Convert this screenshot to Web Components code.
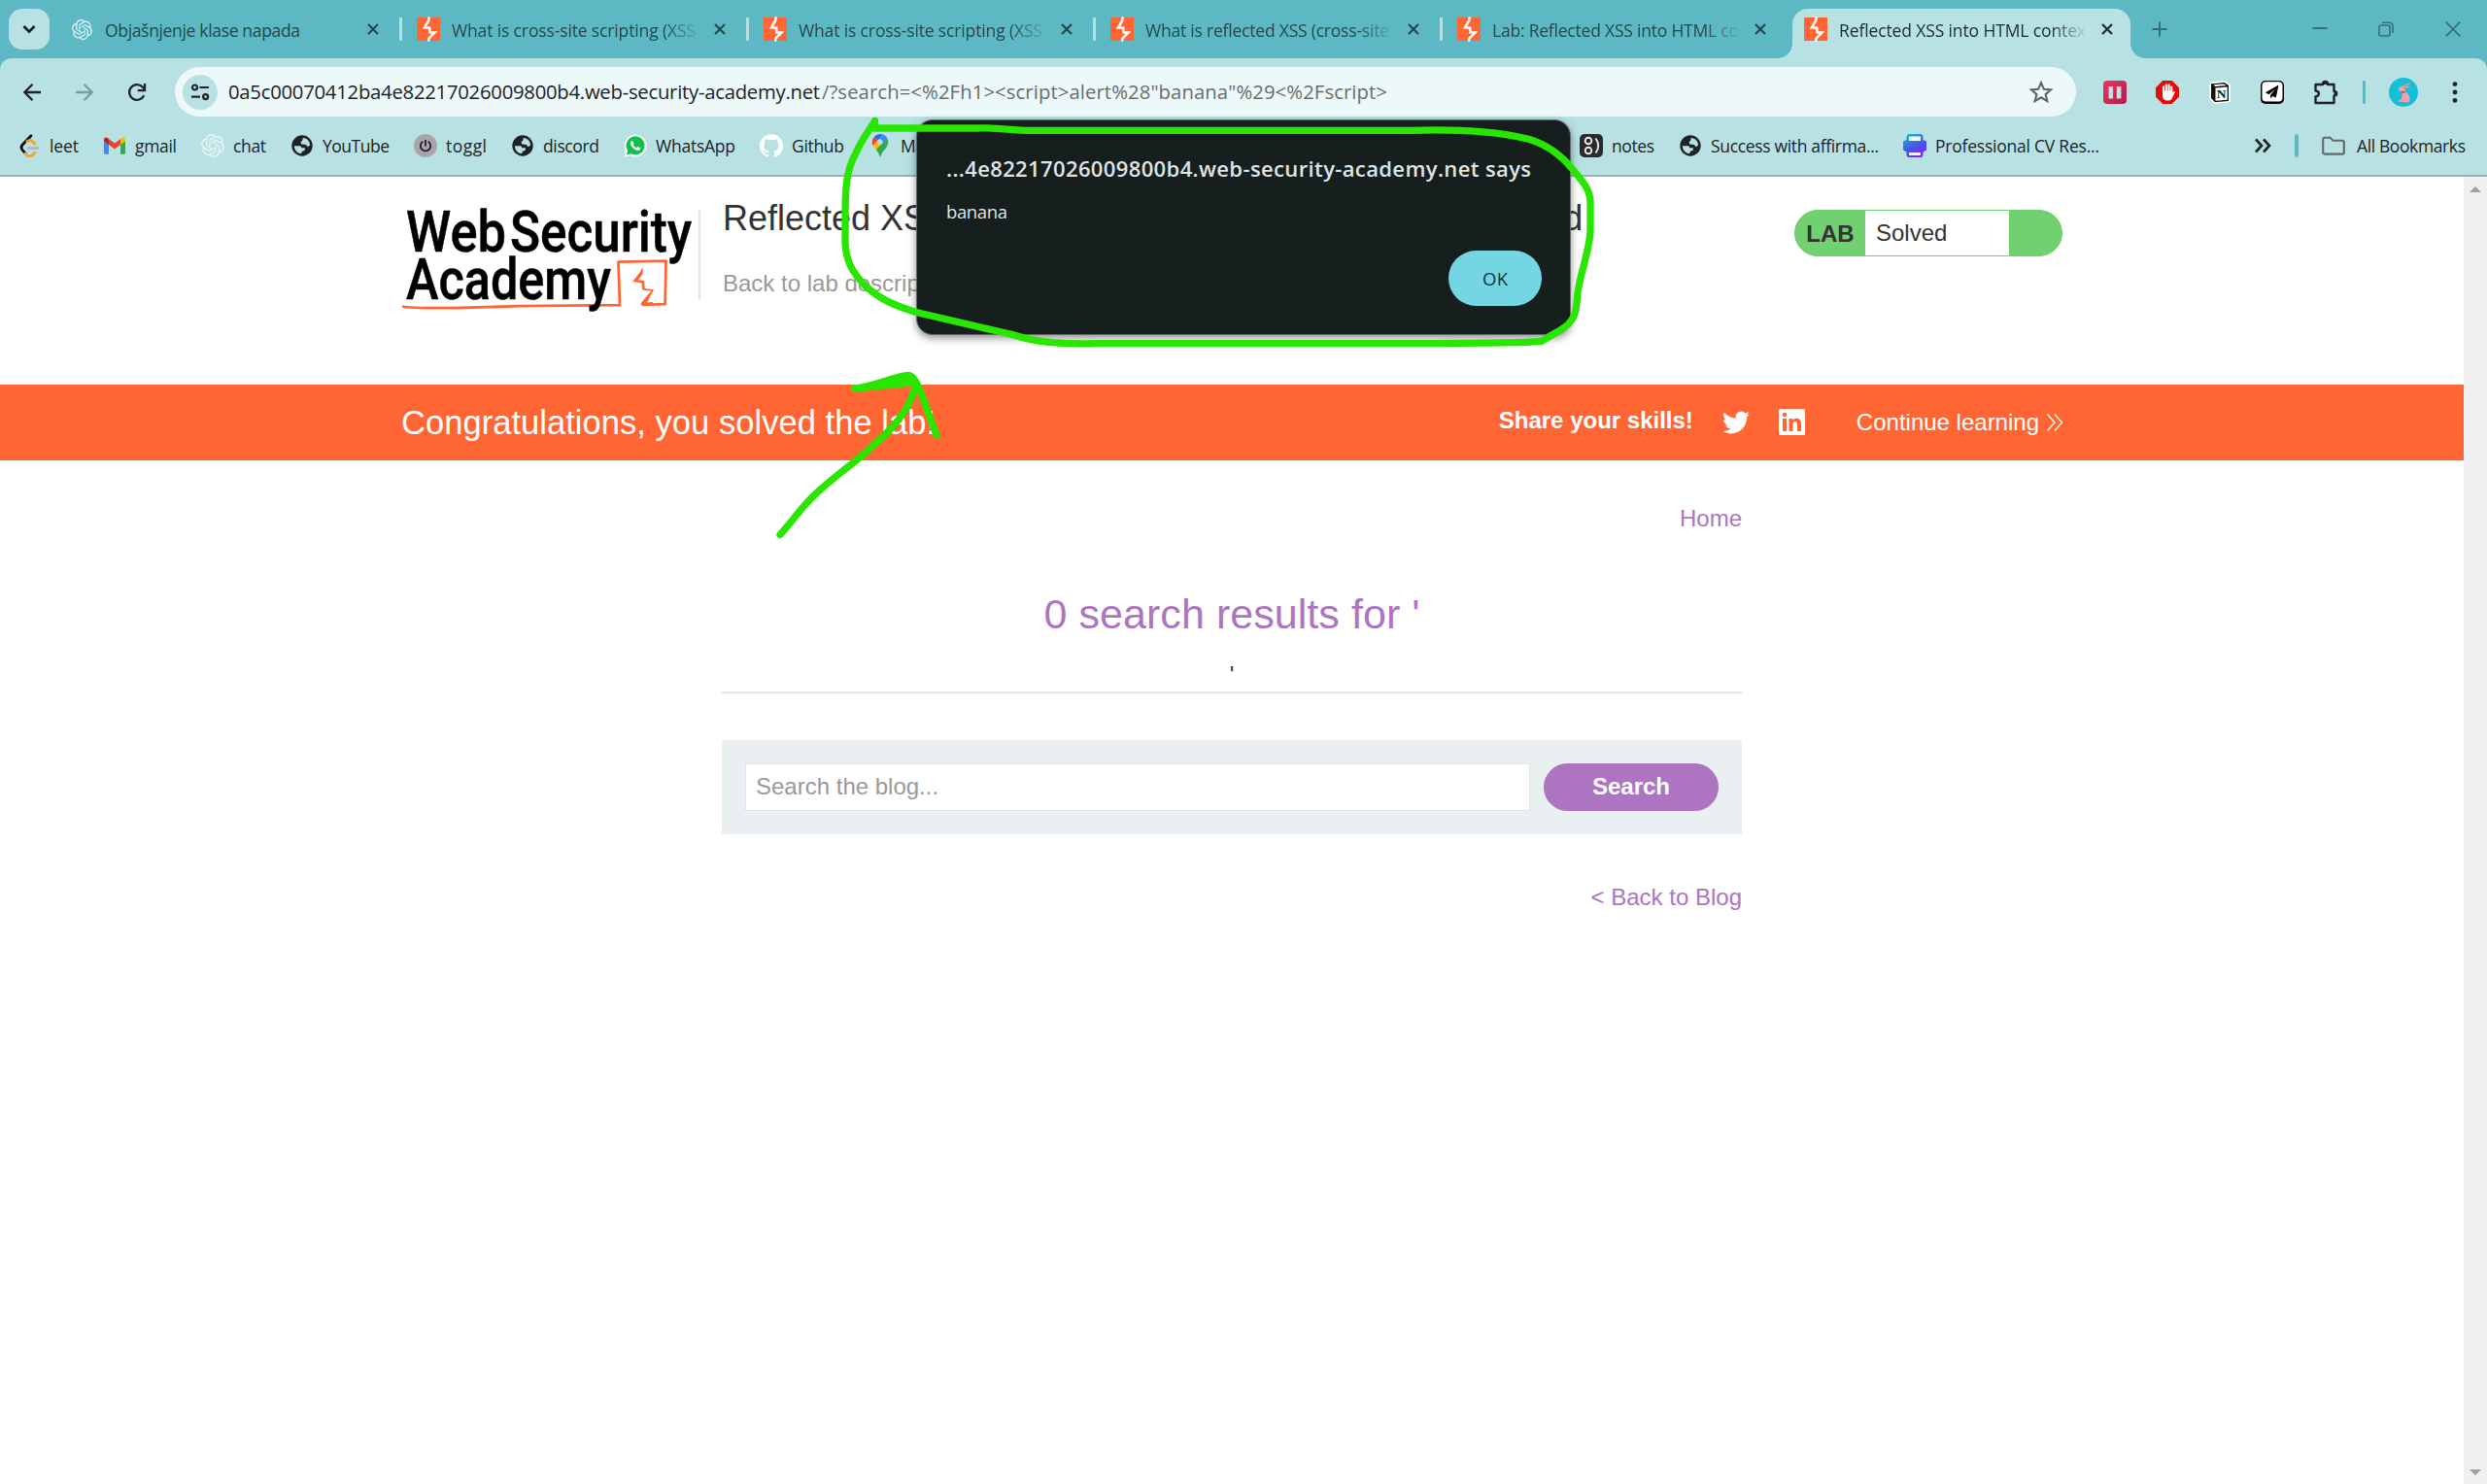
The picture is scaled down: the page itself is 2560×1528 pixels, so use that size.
<!DOCTYPE html>
<html lang="en">
<head>
<meta charset="utf-8">
<title>Reflected XSS into HTML context with nothing encoded</title>
<style>
html,body{margin:0;height:100%;overflow:hidden;background:#fff}
body{font-family:"Liberation Sans",Arial,sans-serif}
</style>
</head>
<body>
<browser-window></browser-window>
<script>
const UI = '"Open Sans","Noto Sans",sans-serif';
const define = (name, html, init) => {
  const tpl = document.createElement('template');
  tpl.innerHTML = html;
  customElements.define(name, class extends HTMLElement {
    constructor() { super(); this.attachShadow({mode: 'open'}); }
    connectedCallback() {
      if (this.ready) return;
      this.ready = true;
      this.shadowRoot.append(tpl.content.cloneNode(true));
      if (init) init(this, this.shadowRoot);
    }
  });
};

/* Text whose tracking adapts so that it fills a given width */
define('fit-text', `<style>:host{display:block;flex:none;white-space:pre}span{display:inline-block}</style><span><slot></slot></span>`,
  (el, root) => {
    const w = +el.getAttribute('w'), s = root.querySelector('span'), n = el.textContent.length;
    s.style.letterSpacing = ((w - s.getBoundingClientRect().width) / Math.max(1, n - 1)).toFixed(3) + 'px';
    el.style.width = w + 'px';
  });

const ICONS = {
  burp: [24, `<rect width="24" height="24" fill="#ff6633"/><path d="M12.8-.5 12 3.5 8 10.3l5.2.4.3 4.6 5 .2-6 6-.5 3" fill="none" stroke="#fff" stroke-width="2.5"/>`],
  gpt: [24, `<path fill="currentColor" d="M22.2819 9.8211a5.9847 5.9847 0 0 0-.5157-4.9108 6.0462 6.0462 0 0 0-6.5098-2.9A6.0651 6.0651 0 0 0 4.9807 4.1818a5.9847 5.9847 0 0 0-3.9977 2.9 6.0462 6.0462 0 0 0 .7427 7.0966 5.98 5.98 0 0 0 .511 4.9107 6.051 6.051 0 0 0 6.5146 2.9001A5.9847 5.9847 0 0 0 13.2599 24a6.0557 6.0557 0 0 0 5.7718-4.2058 5.9894 5.9894 0 0 0 3.9977-2.9001 6.0557 6.0557 0 0 0-.7475-7.0729zm-9.022 12.6081a4.4755 4.4755 0 0 1-2.8764-1.0408l.1419-.0804 4.7783-2.7582a.7948.7948 0 0 0 .3927-.6813v-6.7369l2.02 1.1686a.071.071 0 0 1 .038.052v5.5826a4.504 4.504 0 0 1-4.4945 4.4944zm-9.6607-4.1254a4.4708 4.4708 0 0 1-.5346-3.0137l.142.0852 4.783 2.7582a.7712.7712 0 0 0 .7806 0l5.8428-3.3685v2.3324a.0804.0804 0 0 1-.0332.0615L9.74 19.9502a4.4992 4.4992 0 0 1-6.1408-1.6464zM2.3408 7.8956a4.485 4.485 0 0 1 2.3655-1.9728V11.6a.7664.7664 0 0 0 .3879.6765l5.8144 3.3543-2.0201 1.1685a.0757.0757 0 0 1-.071 0l-4.8303-2.7865A4.504 4.504 0 0 1 2.3408 7.872zm16.5963 3.8558L13.1038 8.364 15.1192 7.2a.0757.0757 0 0 1 .071 0l4.8303 2.7913a4.4944 4.4944 0 0 1-.6765 8.1042v-5.6772a.79.79 0 0 0-.407-.667zm2.0107-3.0231l-.142-.0852-4.7735-2.7818a.7759.7759 0 0 0-.7854 0L9.409 9.2297V6.8974a.0662.0662 0 0 1 .0284-.0615l4.8303-2.7866a4.4992 4.4992 0 0 1 6.6802 4.66zM8.3065 12.863l-2.02-1.1638a.0804.0804 0 0 1-.038-.0567V6.0742a4.4992 4.4992 0 0 1 7.3757-3.4537l-.142.0805L8.704 5.459a.7948.7948 0 0 0-.3927.6813zm1.0976-2.3654l2.602-1.4998 2.6069 1.4998v2.9994l-2.5974 1.4997-2.6067-1.4997Z"/>`],
  close: [12, `<path d="M1 1l10 10M11 1 1 11" stroke="currentColor" stroke-width="2.2" fill="none"/>`],
  chevron: [14, `<path d="M1.5 4 7 9.7 12.5 4" stroke="currentColor" stroke-width="2.6" fill="none"/>`],
  plus: [16, `<path d="M8 .5v15M.5 8h15" stroke="currentColor" stroke-width="2" fill="none"/>`],
  min: [16, `<path d="M.5 7h15" stroke="currentColor" stroke-width="2" fill="none"/>`],
  restore: [16, `<path d="M4 1.2h7.3a3.7 3.7 0 0 1 3.7 3.7V12" stroke="currentColor" stroke-width="1.6" fill="none"/><rect x="1" y="4" width="11" height="11" rx="2" stroke="currentColor" stroke-width="1.6" fill="none"/>`],
  wclose: [16, `<path d="M.7.7l14.6 14.6M15.3.7.7 15.3" stroke="currentColor" stroke-width="1.7" fill="none"/>`],
  back: [20, `<path d="M19 10H3M10.5 1.8 2.3 10l8.2 8.2" stroke="currentColor" stroke-width="2.3" fill="none"/>`],
  fwd: [20, `<path d="M1 10h16M9.5 1.8 17.7 10l-8.2 8.2" stroke="currentColor" stroke-width="2.3" fill="none"/>`],
  reload: [20, `<path d="M17.2 13.2A7.9 7.9 0 1 1 15.7 4.5L18 7" stroke="currentColor" stroke-width="2.3" fill="none"/><path d="M18 1v7.2h-7.2" stroke="currentColor" stroke-width="2.3" fill="none"/>`],
  tune: [20, `<g stroke="currentColor" stroke-width="2.2" fill="none"><circle cx="4.5" cy="5" r="2.5"/><path d="M9.5 5H19M1 14.6h9"/><circle cx="15.6" cy="14.6" r="2.5"/></g>`],
  star: [24, `<path d="M12 2.2l2.9 6.6 7.1.6-5.4 4.7 1.7 7L12 17.3l-6.3 3.8 1.7-7L2 9.4l7.1-.6z" fill="none" stroke="#5b6365" stroke-width="2.1"/>`],
  pause: [24, `<defs><linearGradient id="g" x1="0" y1="0" x2="1" y2="1"><stop offset="0" stop-color="#ee3463"/><stop offset="1" stop-color="#a81f48"/></linearGradient></defs><rect width="24" height="24" rx="4" fill="url(#g)"/><path d="M5.5 6h4.6v12.500H5.500zM13.800 6h4.600v12.500h-4.600z" fill="#c9dde2"/>`],
  hand: [24, `<path d="M7.200 0h9.600L24 7.200v9.600L16.800 24H7.200L0 16.800V7.200z" fill="#e60b0b"/><path d="M8 13V6.200M10.800 11V4.300M13.600 11V4.400M16.300 12V6.500" stroke="#fff" stroke-width="2.100" stroke-linecap="round"/><path d="M7 10.500h10.300v2l1.400-1.400c1-.4 1.300.5.900 1.200l-3 6.200c-1 1.600-2 2-4 2-3.600 0-5.600-2-5.600-5z" fill="#fff"/>`],
  notion: [24, `<path d="M1.500 1.500 17.500 0l5.500 4v18L6.500 24 1.500 19z" fill="#fff"/><path d="M3 3.200 16.700 2 21 5v16L7 22.200 3 18z" fill="#111"/><path d="M5.500 4.300 16 3.400l2.600 1.700-11.300.800z" fill="#fff"/><path d="M7.500 7.400 19.700 6.600v13.200L7.500 20.700z" fill="#fff"/><text x="13.600" y="18.300" text-anchor="middle" font-family="Liberation Serif,serif" font-weight="700" font-size="13.500" fill="#111">N</text>`],
  plane: [26, `<rect x="1" y="1" width="24" height="24" rx="5" fill="#000"/><rect x="2.500" y="2.200" width="21" height="20.300" rx="4" fill="#fff"/><path d="M19.500 5.500 5.800 13.300l3.800 1.900L16 9.500l-5 6.500v3.300l2.300-2.400 3.500 1.600z" fill="#000"/>`],
  puzzle: [26, `<path d="M2.500 5h7.500c0-4 5-4 5 0h6.500v7c3.600 0 3.600 4.600 0 4.600v7.400h-19v-6.500c4.500-.6 4.500-5.400 0-6z" fill="none" stroke="currentColor" stroke-width="2.400" stroke-linejoin="round"/><path d="M9.700 5c0-4.600 5.600-4.600 5.600 0zM21.500 11.500c4.400 0 4.400 5.600 0 5.600z" fill="currentColor"/>`],
  avatar: [30, `<circle cx="15" cy="15" r="15" fill="#13c0d9"/><path d="M20 25.500c2.600-2.500 2-6.500-.8-9l-2.700-2-3.500 2 1 1.500-1.500 4-3.500 2.500z" fill="#f3a0a8"/><path d="M9.500 11.500c1-2.600 3.500-3.400 5.800-2.300l1.700 3-1 2.600-3.500-.5c-1.800-.5-2.800-1.500-3-2.800z" fill="#f3a0a8"/><path d="M14 9.500 21.700 6M14.500 10.500l7-1" stroke="#f08d98" stroke-width="1.700"/><path d="M12 14.500l4.500-.5-.5 2z" fill="#c93648"/>`],
  dots: [24, `<g fill="currentColor"><circle cx="12" cy="3.600" r="2.400"/><circle cx="12" cy="12" r="2.400"/><circle cx="12" cy="20.400" r="2.400"/></g>`],
  leet: [24, `<path d="M14 1.800 5.200 11c-1.700 1.900-1.700 3.700 0 5.600l3.300 3.600" fill="none" stroke="#0b0b0b" stroke-width="2.700" stroke-linecap="round"/><path d="M8 20l1.300 1.400c1.900 1.700 4.700 1.700 6.500 0l2.200-2.300M9.800 7.600c2-1.500 4.300-1.200 6 .3l2.200 2" fill="none" stroke="#ffa116" stroke-width="2.700" stroke-linecap="round"/><path d="M11 14.500h10" stroke="#b3b3b3" stroke-width="2.500" stroke-linecap="round"/>`],
  gmail: [24, `<path d="M1 6.500v12.700c0 .9.700 1.600 1.600 1.600H6V10z" fill="#4285f4"/><path d="M23 6.500v12.700c0 .9-.7 1.600-1.600 1.600H18V10z" fill="#34a853"/><path d="M18 5.500V11l5-3.800V5.900c0-2.200-2.300-3-3.700-1.900z" fill="#fbbc04"/><path d="M6 11V5l6 4.500L18 5v6l-6 4.600z" fill="#ea4335"/><path d="M1 5.900v1.300L6 11V5.300L4.700 4C3.300 2.900 1 3.700 1 5.900z" fill="#c5221f"/>`],
  globe: [24, `<circle cx="12" cy="12" r="10.700" fill="#202326"/><path d="M12.800 4c4 .2 7.100 3.200 7.300 7.500l-2.600 1.800-1.500-2.300-4.600-.5-.9-2.500 1.700-1z" fill="#b8e1e4"/><path d="M3.900 12.200h6.300l1.300 2h3.300v2.600l-3.100 1.100-.4 2.200c-4.200-.3-7.400-3.600-7.400-7.900z" fill="#b8e1e4"/>`],
  toggl: [24, `<circle cx="12" cy="12" r="12" fill="#aaa5a9"/><path d="M12 6v6.500M9.300 7.800a5.200 5.200 0 1 0 5.400 0" fill="none" stroke="#2c1338" stroke-width="1.800"/>`],
  whatsapp: [24, `<path d="M.5 23.800 2 17.500A11.500 11.500 0 1 1 7 22.300z" fill="#fff"/><path d="M3 21.300l1-4.400A9.500 9.500 0 1 1 7.500 20.200z" fill="#11c04b"/><path d="M8.700 6.800c-.7 0-2 1-1.700 3 .5 3 3.600 6.300 7.300 7.100 1.700.2 2.900-.9 3-2.400l-2.800-1.500-1.300 1.300c-1.800-.8-2.900-2-3.600-3.500l1-1.200z" fill="#fff"/>`],
  github: [24, `<path fill="#fff" d="M12 .297c-6.630 0-12 5.373-12 12 0 5.303 3.438 9.800 8.205 11.385.6.113.820-.258.820-.577 0-.285-.010-1.040-.015-2.040-3.338.724-4.042-1.610-4.042-1.610C4.422 18.070 3.633 17.700 3.633 17.700c-1.087-.744.084-.729.084-.729 1.205.084 1.838 1.236 1.838 1.236 1.070 1.835 2.809 1.305 3.495.998.108-.776.417-1.305.760-1.605-2.665-.300-5.466-1.332-5.466-5.930 0-1.310.465-2.380 1.235-3.220-.135-.303-.540-1.523.105-3.176 0 0 1.005-.322 3.300 1.230.960-.267 1.980-.399 3-.405 1.020.006 2.040.138 3 .405 2.280-1.552 3.285-1.230 3.285-1.230.645 1.653.240 2.873.120 3.176.765.840 1.230 1.910 1.230 3.220 0 4.610-2.805 5.625-5.475 5.920.420.360.810 1.096.810 2.220 0 1.606-.015 2.896-.015 3.286 0 .315.210.690.825.570C20.565 22.092 24 17.592 24 12.297c0-6.627-5.373-12-12-12"/>`],
  maps: [24, `<path d="M12 0a8.200 8.200 0 0 0-6.300 2.900L9.600 6.300 15 .6A8 8 0 0 0 12 0z" fill="#1a73e8"/><path d="M5.700 2.900A8.200 8.200 0 0 0 4.700 12l4.900-5.700z" fill="#ea4335"/><path d="M15 .6 9.600 6.300a3.200 3.200 0 0 1 4.900 4L19.400 4.500A8.200 8.200 0 0 0 15 .6z" fill="#4285f4"/><path d="M4.700 12c.8 1.500 1.900 2.700 3 4.100l6.800-5.800a3.200 3.200 0 0 1-4.900-4z" fill="#fbbc04"/><path d="M7.700 16.100C9.500 18.500 11 20.500 11.500 23.300h1c1-5 5.100-7.300 6.800-11.300a8.200 8.200 0 0 0 .1-7.500z" fill="#34a853"/>`],
  notes: [24, `<rect width="24" height="24" rx="5" fill="#2b2b2d"/><g fill="none" stroke="#e9e9e9" stroke-width="1.900"><circle cx="9" cy="7" r="3.300"/><circle cx="9" cy="17" r="3.300"/><path d="M16.500 4.500c3.600 4.500 3.600 10.500 0 15"/></g>`],
  cv: [24, `<defs><linearGradient id="c" x1=".2" y1="0" x2=".7" y2="1"><stop offset="0" stop-color="#15b8cf"/><stop offset=".55" stop-color="#4756e8"/><stop offset="1" stop-color="#8a20ee"/></linearGradient></defs><path d="M5 0h14l1.500 2.500V6L24 7.500v9l-3.500 2V22L19 24H5l-1.500-2v-3.500L0 16.500v-9L3.500 6V2.500z" fill="url(#c)"/><path d="M6 2.500h12V7H6zM6 19h12v3H6z" fill="#eefcff"/>`],
  more: [18, `<path d="M2 2.500 8 9l-6 6.500M10 2.500 16 9l-6 6.500" fill="none" stroke="currentColor" stroke-width="2.600"/>`],
  folder: [24, `<path d="M1.200 5.500c0-1 .7-1.700 1.700-1.700h5.600l3 3h9.600c1 0 1.700.7 1.700 1.700v10.400c0 1-.7 1.700-1.700 1.700H2.900c-1 0-1.700-.7-1.700-1.700z" fill="none" stroke="#63686a" stroke-width="2.100"/>`],
  twitter: [24, `<path fill="#fff" d="M23.953 4.570a10 10 0 01-2.825.775 4.958 4.958 0 002.163-2.723c-.951.555-2.005.959-3.127 1.184a4.920 4.920 0 00-8.384 4.482C7.690 8.095 4.067 6.130 1.640 3.162a4.822 4.822 0 00-.666 2.475c0 1.710.870 3.213 2.188 4.096a4.904 4.904 0 01-2.228-.616v.060a4.923 4.923 0 003.946 4.827 4.996 4.996 0 01-2.212.085 4.936 4.936 0 004.604 3.417 9.867 9.867 0 01-6.102 2.105c-.390 0-.779-.023-1.170-.067a13.995 13.995 0 007.557 2.209c9.053 0 13.998-7.496 13.998-13.985 0-.210 0-.420-.015-.630A9.935 9.935 0 0024 4.590z"/>`],
  linkedin: [27, `<rect width="27" height="27" rx="1.500" fill="#fff"/><g fill="#ff6633"><circle cx="6" cy="6" r="2.300"/><rect x="4" y="10" width="4" height="13"/><path d="M10.500 10h3.800v1.800c1.700-3.300 8.700-3.200 8.700 3V23h-4v-7c0-4.200-4.500-3.700-4.500 0v7h-4z"/></g>`],
  next: [18, `<path d="M1.500.5 9 9l-7.500 8.500M9 .5 16.500 9 9 17.500" fill="none" stroke="#fff" stroke-width="1.300"/>`],
  up: [12, `<path d="M0 9 6 3l6 6z" fill="#a0a0a0"/>`],
  down: [12, `<path d="M0 3h12L6 9z" fill="#a0a0a0"/>`]
};
define('ui-icon', `<style>:host{display:block;flex:none;line-height:0}svg{display:block;overflow:visible}</style><svg></svg>`, (el, root) => {
  const [vb, body] = ICONS[el.getAttribute('name')], svg = root.querySelector('svg'), s = el.getAttribute('size') || vb;
  svg.setAttribute('viewBox', `0 0 ${vb} ${vb}`);
  svg.setAttribute('width', s); svg.setAttribute('height', s);
  svg.innerHTML = body;
});

define('browser-tab', `<style>
:host{display:flex;align-items:center;width:357px;height:60px;flex:none;box-sizing:border-box;color:#24484d;position:relative}
.icon{margin-left:15px;display:flex;justify-content:center;width:24px}
.label{width:252px;overflow:hidden;margin-left:12px;height:30px;line-height:31px;padding-top:1px;box-sizing:border-box}
:host([fade]) .label{-webkit-mask:linear-gradient(90deg,#000 218px,transparent 256px)}
.x{margin-left:18px}
.sep{width:3px;height:24px;background:#b8e1e4;margin-left:21px;border-radius:1px}
:host([last]) .sep{visibility:hidden}
:host([active]){color:#1b2b2e;width:348px;margin-left:3px;height:51px;margin-top:9px;background:#b8e1e4;border-radius:16px 16px 0 0;padding-bottom:9px}
:host([active]) .icon{margin-left:12px}
:host([active]) .sep{display:none}
:host([active])::before,:host([active])::after{content:"";position:absolute;bottom:0;width:15px;height:15px}
:host([active])::before{left:-15px;background:radial-gradient(circle at 0 0,transparent 14.500px,#b8e1e4 15px)}
:host([active])::after{right:-15px;background:radial-gradient(circle at 100% 0,transparent 14.500px,#b8e1e4 15px)}
</style><div class="icon"><slot name="icon"></slot></div><div class="label"><slot></slot></div><ui-icon class="x" name="close"></ui-icon><div class="sep"></div>`);

define('tab-strip', `<style>
:host{display:flex;height:60px;background:#5cb8c2;font:17.500px ${UI};align-items:flex-start}
.search{width:42px;height:42px;margin:9px 0 0 9px;border-radius:14px;background:#b8e1e4;display:flex;align-items:center;justify-content:center;color:#111c1e}
.tabs{display:flex;margin-left:6px}
.win{display:flex;align-items:center;height:60px;color:#357078;flex:1}
.plus{margin-left:22px}.m{margin-left:149px}.r{margin-left:52px}.c{margin-left:53px}
</style>
<div class="search"><ui-icon name="chevron"></ui-icon></div>
<div class="tabs">
<browser-tab><ui-icon slot="icon" name="gpt" size="21" style="color:#d9f1f3"></ui-icon><fit-text w="201">Objašnjenje klase napada</fit-text></browser-tab>
<browser-tab fade><ui-icon slot="icon" name="burp"></ui-icon><fit-text w="251">What is cross-site scripting (XSS</fit-text></browser-tab>
<browser-tab fade><ui-icon slot="icon" name="burp"></ui-icon><fit-text w="251">What is cross-site scripting (XSS</fit-text></browser-tab>
<browser-tab fade><ui-icon slot="icon" name="burp"></ui-icon><fit-text w="251">What is reflected XSS (cross-site</fit-text></browser-tab>
<browser-tab fade last><ui-icon slot="icon" name="burp"></ui-icon><fit-text w="254">Lab: Reflected XSS into HTML co</fit-text></browser-tab>
<browser-tab active fade><ui-icon slot="icon" name="burp"></ui-icon><fit-text w="254">Reflected XSS into HTML contex</fit-text></browser-tab>
</div>
<div class="win"><ui-icon class="plus" name="plus"></ui-icon><ui-icon class="m" name="min"></ui-icon><ui-icon class="r" name="restore"></ui-icon><ui-icon class="c" name="wclose"></ui-icon></div>`);

define('tool-bar', `<style>
:host{display:block;background:#5cb8c2}
.row{display:flex;align-items:center;height:69px;background:#b8e1e4;border-radius:12px 12px 0 0;color:#202326;box-sizing:border-box}
.pill{display:flex;align-items:center;width:1957px;height:51px;border-radius:26px;background:#edf8f9;margin-left:29px;font:20.300px ${UI}}
.pill fit-text{line-height:28px;margin-top:-2px}
.info{width:36px;height:36px;border-radius:18px;background:#b8e1e4;margin-left:8px;display:flex;align-items:center;justify-content:center}
.host{margin-left:11px}.rest{color:#666e70;margin-left:2px}
.sep{width:3px;height:24px;background:#5cb8c2;margin-left:26px;border-radius:1px}
</style>
<div class="row">
<ui-icon name="back" style="margin-left:23px"></ui-icon>
<ui-icon name="fwd" style="margin-left:34px;color:#7b9da1"></ui-icon>
<ui-icon name="reload" style="margin-left:34px"></ui-icon>
<div class="pill"><div class="info"><ui-icon name="tune"></ui-icon></div><fit-text class="host" w="609">0a5c00070412ba4e82217026009800b4.web-security-academy.net</fit-text><fit-text class="rest" w="582">/?search=&lt;%2Fh1&gt;&lt;script&gt;alert%28"banana"%29&lt;%2Fscript&gt;</fit-text><ui-icon name="star" style="margin-left:661px"></ui-icon></div>
<ui-icon name="pause" style="margin-left:28px"></ui-icon>
<ui-icon name="hand" style="margin-left:30px"></ui-icon>
<ui-icon name="notion" style="margin-left:30px"></ui-icon>
<ui-icon name="plane" style="margin-left:29px"></ui-icon>
<ui-icon name="puzzle" style="margin-left:29px"></ui-icon>
<div class="sep" style="margin-left:25px"></div>
<ui-icon name="avatar" style="margin-left:24px"></ui-icon>
<ui-icon name="dots" style="margin-left:26px"></ui-icon>
</div>`);

define('book-mark', `<style>:host{display:flex;align-items:center;gap:9px;flex:none}</style><slot name="icon"></slot><slot></slot>`);

define('bookmarks-bar', `<style>
:host{display:flex;align-items:center;height:53px;padding:0 22px 9px 18px;box-sizing:border-box;background:#b8e1e4;border-bottom:2px solid #93b3b7;font:17.500px ${UI};color:#202326}
fit-text{line-height:28px;margin-top:-1px}
.left{display:flex;gap:25px}
.right{display:flex;gap:25px;width:912px;margin-left:auto;flex:none}
.left,.right{align-items:center;height:42px}
.end{display:flex;align-items:center;margin-left:auto}
.sep{width:4px;height:24px;background:#5cb8c2;border-radius:2px;margin:0 24px}
</style><div class="left"></div><div class="right"></div>`, (el, root) => {
  const item = (icon, text, w, color) => `<book-mark><ui-icon slot="icon" name="${icon}"${color ? ` style="color:${color}"` : ''}></ui-icon><fit-text w="${w}">${text}</fit-text></book-mark>`;
  root.querySelector('.left').innerHTML = item('leet', 'leet', 30) + item('gmail', 'gmail', 43) + item('gpt', 'chat', 34, '#e3f5f6') + item('globe', 'YouTube', 69) + item('toggl', 'toggl', 42) + item('globe', 'discord', 58) + item('whatsapp', 'WhatsApp', 82) + item('github', 'Github', 54) + item('maps', 'Maps', 42);
  root.querySelector('.right').innerHTML = item('notes', 'notes', 44) + item('globe', 'Success with affirma...', 173) + item('cv', 'Professional CV Res...', 169) + '<div class="end"><ui-icon name="more"></ui-icon><div class="sep"></div><book-mark style="gap:12px"><ui-icon slot="icon" name="folder"></ui-icon><fit-text w="112">All Bookmarks</fit-text></book-mark></div>';
});

define('academy-logo', `<style>:host{display:block;width:306px;height:110px;flex:none}svg{display:block;overflow:visible}text{font-family:Roboto,sans-serif;font-weight:500;font-size:58.500px;fill:#000;stroke:#000;stroke-width:.5px}</style>
<svg width="306" height="110" viewBox="413 208 306 110">
<path d="M414 315.500c10 2 30 2 60 1.500l60-1.800 104-1-1.500-44.500 49-1-.8 44.500-24 .6" fill="none" stroke="#ff6633" stroke-width="2.800" stroke-linejoin="round"/>
<path d="M661.500 274.500c-1.500 5-6 10-10.500 15.500l9.500 1.200.6 7.400 9.400.9-10.800 12.600.3 2 13-.6-1.400-2.400-5.600.3L673 298.300l-9.300-1.300-.5-8-6.200-.8 4.700-6.200z" fill="#ff6633"/>
<text x="418" y="259" textLength="103" lengthAdjust="spacingAndGlyphs">Web</text>
<text x="525" y="259" textLength="187" lengthAdjust="spacingAndGlyphs">Security</text>
<text x="418" y="307.700" textLength="211" lengthAdjust="spacingAndGlyphs">Academy</text>
</svg>`);

define('lab-status', `<style>
:host{display:flex;width:276px;height:48px;box-sizing:border-box;border:1px solid #71d06f;border-radius:24px;background:#71d06f;overflow:hidden;font-size:24px;line-height:48px;color:#333}
b{width:72px;text-align:center;padding-left:0}span{width:137px;padding-left:11px;background:#fff;line-height:46px}
</style><b>LAB</b><span>Solved</span>`);

define('lab-header', `<style>
:host{display:flex;justify-content:space-between;align-items:flex-start;width:1710px;height:214px;margin-left:413px;padding-top:26px;box-sizing:border-box;color:#333}
.l{display:flex}
.line{width:2px;height:93px;background:#e6e6e6;margin-top:8px}
.t{margin-left:23px;white-space:nowrap}
h2{font-size:36px;font-weight:400;margin:0;line-height:33px}
a{display:block;font-size:24px;color:#999;line-height:30px;margin-top:36px}
lab-status{margin-top:8px}
</style>
<div class="l"><academy-logo></academy-logo><div class="line"></div><div class="t"><h2>Reflected XSS into HTML context with nothing encoded</h2><a>Back to lab description</a></div></div>
<lab-status></lab-status>`);

define('solved-banner', `<style>
:host{display:flex;height:78px;background:#ff6633;color:#fff;padding:0 412px 0 413px;align-items:center;box-sizing:border-box;font-size:24px;line-height:30px;white-space:nowrap}
.c{margin-right:auto;font-size:34.500px;line-height:40px;margin-top:-1px}
b{margin-top:-4px}
</style>
<fit-text class="c" w="550">Congratulations, you solved the lab!</fit-text>
<b>Share your skills!</b>
<ui-icon name="twitter" size="28" style="margin-left:30px"></ui-icon>
<ui-icon name="linkedin" style="margin-left:30px;margin-top:-1px"></ui-icon>
<span style="margin-left:53px">Continue learning</span>
<ui-icon name="next" style="margin-left:7px"></ui-icon>`);

define('blog-search', `<style>
:host{display:flex;gap:14px;height:97px;padding:24px;box-sizing:border-box;background:#eaeff2;font-size:24px;line-height:45px}
.in{width:808px;box-sizing:border-box;background:#fff;border:1px solid #e2e2e2;color:#999;padding-left:10px;height:49px}
.b{width:180px;height:49px;border-radius:25px;background:#ad74c2;color:#fff;font-weight:700;text-align:center;line-height:47px}
</style><div class="in">Search the blog...</div><div class="b">Search</div>`);

define('blog-page', `<style>
:host{display:block;width:1050px;margin-left:743px;font-size:24px;line-height:30px;color:#ad74c2}
.r{text-align:right}
.home{padding-top:45px}
h1{font-weight:400;font-size:43px;line-height:50px;margin:58px 0 0;display:flex;justify-content:center}
.q{text-align:center;color:#333;margin-top:23px}
.hr{height:2px;background:#e5e5e5;margin:2px 0 48px}
.back{padding-top:50px}
</style>
<div class="r home">Home</div>
<h1><fit-text w="387">0 search results for '</fit-text></h1>
<div class="q">'</div><div class="hr"></div>
<blog-search></blog-search>
<div class="r back">&lt; Back to Blog</div>`);

define('scroll-bar', `<style>:host{display:flex;flex-direction:column;justify-content:space-between;align-items:center;width:24px;background:#f0f0f0;padding:7px 0 6px;box-sizing:border-box;flex:none}</style><ui-icon name="up"></ui-icon><ui-icon name="down"></ui-icon>`);

define('alert-dialog', `<style>
:host{position:absolute;left:943px;top:123px;width:674px;height:222px;box-sizing:border-box;border:1.500px solid #626a6b;border-radius:17px;background:#171e1e;box-shadow:0 3px 8px rgba(0,0,0,.45);color:#dfe5e5;font:18.500px ${UI};padding:33px 29px 29px 30px;display:flex;flex-direction:column}
.t{font-size:22px;font-weight:600;line-height:32px}
.m{line-height:28px;margin-top:15px}
.ok{align-self:flex-end;margin-top:auto;width:96px;height:57px;border-radius:28.500px;background:#74d6e2;color:#0c343b;font-size:18.500px;font-weight:500;line-height:57px;display:flex;justify-content:center}
</style><fit-text class="t" w="602">...4e82217026009800b4.web-security-academy.net says</fit-text><fit-text class="m" w="63">banana</fit-text><div class="ok"><fit-text w="26">OK</fit-text></div>`);

/* Freehand highlighter marks drawn over the whole window */
define('pen-marks', `<style>:host{position:absolute;left:0;top:0;pointer-events:none}svg{display:block}</style>
<svg width="2560" height="1528" fill="none" stroke="#29e600" stroke-width="7.300" stroke-linecap="round" stroke-linejoin="round">
<path d="M900.500 124.500v7.500h103c26-1 37 2.500 60 2.300h390c50-1.500 88 1 120 9 20 6 35 18 46 32 11 13 17 20 17.500 32v30c-1 22-9 38-13 64-1.500 14-1 20-6 28-6 9-14 11-31 22-22 2-60 2-120 2.300h-340c-38 1-60-1-86-9.300L943 321.500c-25-8-38-14-52-27-14-14-20-26-21-44v-25c0-33 1-50 11-68 5-12 12-21 19-32"/>
<path d="M803 550.500c10-11 20-25 31-36.500 22-22 42-34 60-51 22-19 42-38 49-68M880 400c20-2 40-12.500 56-13.500 5 1 9 10 12 18l16 43.500M880 400l61-6.500"/>
</svg>`);

define('browser-window', `<style>
:host{display:flex;flex-direction:column;position:relative;width:2560px;height:1528px;overflow:hidden;background:#fff}
.view{display:flex;flex:1;min-height:0}
.page{flex:1;min-width:0}
</style>
<tab-strip></tab-strip><tool-bar></tool-bar><bookmarks-bar></bookmarks-bar>
<div class="view"><div class="page"><lab-header></lab-header><solved-banner></solved-banner><blog-page></blog-page></div><scroll-bar></scroll-bar></div>
<alert-dialog></alert-dialog><pen-marks></pen-marks>`);
</script>
</body>
</html>
